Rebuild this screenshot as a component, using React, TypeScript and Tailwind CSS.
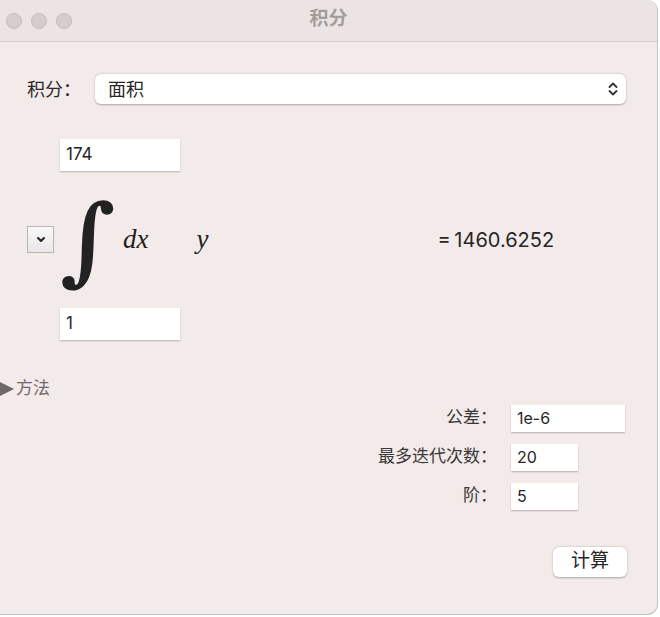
import type { FC } from 'react';

const cjk = "font-['Inter','Noto_Sans_CJK_SC',sans-serif]";

const Field: FC<{ value: string; className?: string }> = ({ value, className }) => (
  <div
    className={`flex h-[27px] items-center bg-white px-[6px] text-[16px] text-[#262626] shadow-[0_1px_1.5px_rgba(0,0,0,0.25)] ${className ?? ''}`}
  >
    {value}
  </div>
);

const ParamRow: FC<{ label: string; value: string; wide?: boolean }> = ({ label, value, wide }) => (
  <div className="flex items-center justify-end">
    <span className="mr-[14px] text-[17px] text-[#3a3737]">{label}：</span>
    <Field value={value} className={wide ? 'w-[114px] mr-[32px]' : 'w-[67px] mr-[79px]'} />
  </div>
);

export default function App() {
  return (
    <div className={`h-[617px] w-[660px] bg-white ${cjk}`}>
      <div className="flex h-[615px] w-[658px] flex-col overflow-hidden rounded-br-[11px] rounded-tr-[11px] border-b border-r border-[#c8c1c0] bg-[#f3ebe9]">
        {/* title bar */}
        <div className="relative flex h-[42px] shrink-0 items-center border-b border-[#d3cccb] bg-[#ece4e2]">
          <div className="ml-[6px] flex gap-[9px]">
            <span className="block h-[16px] w-[16px] shrink-0 rounded-full border border-[#c5bdbc] bg-[#d5cdcc]" />
            <span className="block h-[16px] w-[16px] shrink-0 rounded-full border border-[#c5bdbc] bg-[#d5cdcc]" />
            <span className="block h-[16px] w-[16px] shrink-0 rounded-full border border-[#c5bdbc] bg-[#d5cdcc]" />
          </div>
          <span className="absolute left-0 right-0 top-[5px] text-center text-[19px] font-bold text-[#a39d9c]">积分</span>
        </div>

        {/* mode select */}
        <div className="mt-[32px] flex items-center pl-[27px] pr-[31px]">
          <span className="w-[68px] text-[18px] text-[#2b2828]">积分：</span>
          <div className="flex h-[30px] flex-1 items-center justify-between rounded-[6px] bg-white pl-[13px] pr-[8px] shadow-[0_0.5px_2px_rgba(0,0,0,0.3)]">
            <span className="text-[18px] text-[#262626]">面积</span>
            <svg width="10" height="16" viewBox="0 0 10 16" fill="none" stroke="#333" strokeWidth="1.8" strokeLinecap="round" strokeLinejoin="round">
              <path d="M1.5 6 5 2.5 8.5 6" />
              <path d="M1.5 10 5 13.5 8.5 10" />
            </svg>
          </div>
        </div>

        {/* integral block */}
        <div className="mt-[35px] flex flex-col pl-[60px]">
          <Field value="174" className="h-[32px] w-[120px] text-[17px]" />
        </div>
        <div className="flex h-[137px] items-center pl-[27px]">
          <div className="flex h-[27px] w-[27px] shrink-0 items-center justify-center border border-[#b9b4b3] bg-gradient-to-b from-[#f9f8f8] to-[#e9e7e7]">
            <svg width="10" height="7" viewBox="0 0 10 7" fill="none" stroke="#222" strokeWidth="2" strokeLinecap="round" strokeLinejoin="round">
              <path d="M2 2 5 5 8 2" />
            </svg>
          </div>
          <span className="ml-[6px] w-[60px] font-['DejaVu_Serif',serif] text-[96px] font-bold leading-none text-[#222]">∫</span>
          <span className="ml-[3px] font-['Liberation_Serif',serif] text-[27px] italic text-[#222]">dx</span>
          <span className="ml-[48px] font-['Liberation_Serif',serif] text-[27px] italic text-[#222]">y</span>
          <span className="ml-[229px] text-[20px] text-[#262626]">=&thinsp;1460.6252</span>
        </div>
        <div className="flex flex-col pl-[60px]">
          <Field value="1" className="h-[32px] w-[120px] text-[17px]" />
        </div>

        {/* method disclosure */}
        <div className="mt-[36px] flex items-center">
          <svg width="14" height="16" viewBox="0 0 14 16">
            <path d="M0 1 14 8 0 15Z" fill="#6f6a69" />
          </svg>
          <span className="ml-[2px] text-[17px] text-[#6f6a69]">方法</span>
        </div>

        {/* params */}
        <div className="mt-[3px] flex flex-col gap-[12px]">
          <ParamRow label="公差" value="1e-6" wide />
          <ParamRow label="最多迭代次数" value="20" />
          <ParamRow label="阶" value="5" />
        </div>

        <div className="mt-[37px] flex justify-end pr-[30px]">
          <div className="flex h-[30px] w-[74px] items-center justify-center rounded-[6px] bg-white text-[19px] text-[#262626] shadow-[0_0.5px_2px_rgba(0,0,0,0.3)]">
            计算
          </div>
        </div>
      </div>
    </div>
  );
}
